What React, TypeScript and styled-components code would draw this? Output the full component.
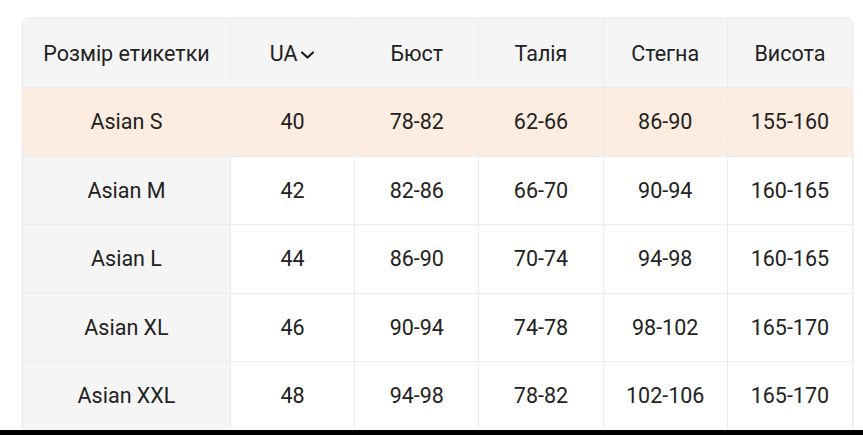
import React from 'react';
import styled, { createGlobalStyle } from 'styled-components';

const GlobalStyle = createGlobalStyle`
  html, body {
    margin: 0;
    padding: 0;
    background: #ffffff;
    font-family: Roboto, "Noto Sans", Arial, sans-serif;
  }
`;

const Page = styled.div`
  height: 435px;
  display: flex;
  flex-direction: column;
  overflow: hidden;
`;

const Viewport = styled.div`
  height: 430px;
  overflow: hidden;
  padding: 18px 11px 0 22px;
  box-sizing: border-box;
`;

const BottomBar = styled.div`
  height: 5px;
  background: #000;
`;

const Table = styled.div`
  width: 831px;
  display: grid;
  grid-template-columns: 208px repeat(5, 1fr);
  border: 1px solid #e9e9e9;
  border-radius: 6px;
  box-shadow: 0 0 3px rgba(0, 0, 0, 0.08);
  overflow: hidden;
  box-sizing: border-box;
`;

const Cell = styled.div<{ $bg: string; $head?: boolean; $last?: boolean }>`
  height: ${(p) => (p.$head ? '69px' : '68.5px')};
  display: flex;
  align-items: center;
  justify-content: center;
  gap: 3px;
  background: ${(p) => p.$bg};
  color: #222222;
  font-size: 21.5px;
  font-weight: 400;
  border-bottom: 1px solid #ececec;
  border-right: ${(p) => (p.$last ? 'none' : '1px solid #ececec')};
  box-sizing: border-box;
`;

const Chevron = () => (
  <svg width="15" height="10" viewBox="0 0 15 10" style={{ marginTop: 3 }}>
    <path d="M2 2.5 L7.5 7.5 L13 2.5" fill="none" stroke="#1c1c1c" strokeWidth="2.2" strokeLinecap="round" strokeLinejoin="round" />
  </svg>
);

const headers = ['Розмір етикетки', 'UA', 'Бюст', 'Талія', 'Стегна', 'Висота'];

const rows = [
  ['Asian S', '40', '78-82', '62-66', '86-90', '155-160'],
  ['Asian M', '42', '82-86', '66-70', '90-94', '160-165'],
  ['Asian L', '44', '86-90', '70-74', '94-98', '160-165'],
  ['Asian XL', '46', '90-94', '74-78', '98-102', '165-170'],
  ['Asian XXL', '48', '94-98', '78-82', '102-106', '165-170'],
];

const App: React.FC = () => (
  <Page>
    <GlobalStyle />
    <Viewport>
      <Table>
        {headers.map((h, i) => (
          <Cell key={h} $head $bg="#f5f5f6" $last={i === headers.length - 1}>
            {h}
            {h === 'UA' && <Chevron />}
          </Cell>
        ))}
        {rows.map((row, r) =>
          row.map((v, c) => (
            <Cell
              key={`${r}-${c}`}
              $last={c === row.length - 1}
              $bg={r === 0 ? '#fdede0' : c === 0 ? '#f5f5f5' : '#ffffff'}
            >
              {v}
            </Cell>
          ))
        )}
      </Table>
    </Viewport>
    <BottomBar />
  </Page>
);

export default App;
